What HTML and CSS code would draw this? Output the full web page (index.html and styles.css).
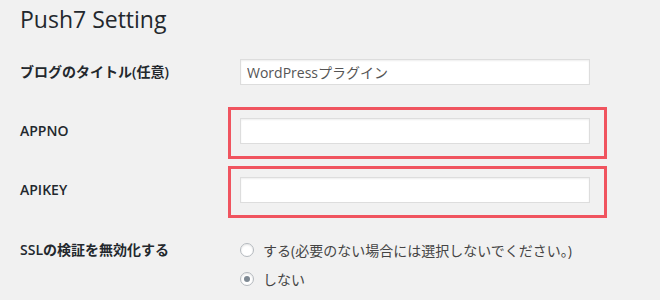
FILE: index.html
```html
<!DOCTYPE html>
<html lang="ja">
<head>
  <meta charset="UTF-8" />
  <title>Push7 Setting</title>
  <link rel="stylesheet" href="styles.css">
</head>
<body>
  <div class="wrap">
    <h1 class="page-title">Push7 Setting</h1>

    <div class="form-table">
      <div class="row">
        <div class="label">ブログのタイトル(任意)</div>
        <div class="field">
          <input type="text" class="regular-text" value="WordPressプラグイン" />
        </div>
      </div>

      <div class="row">
        <div class="label">APPNO</div>
        <div class="field">
          <div class="highlight">
            <input type="text" class="regular-text" value="" />
          </div>
        </div>
      </div>

      <div class="row">
        <div class="label">APIKEY</div>
        <div class="field">
          <div class="highlight">
            <input type="text" class="regular-text" value="" />
          </div>
        </div>
      </div>

      <div class="row row-top">
        <div class="label">SSLの検証を無効化する</div>
        <div class="field">
          <label class="radio"><span class="radio-dot"></span>する(必要のない場合には選択しないでください。)</label>
          <label class="radio"><span class="radio-dot checked"></span>しない</label>
        </div>
      </div>
    </div>
  </div>
</body>
</html>
```

FILE: styles.css
```css
* { box-sizing: border-box; margin: 0; padding: 0; }
body {
  background: #f1f1f1;
  color: #23282d;
  font-family: 'Open Sans', 'Noto Sans CJK JP', sans-serif;
  font-size: 14px;
}
.wrap { padding: 5px 20px 0; }
.page-title {
  font-size: 23px;
  font-weight: 400;
  line-height: 29px;
  height: 38px;
}

.row {
  display: grid;
  grid-template-columns: 220px 1fr;
  align-items: center;
  padding: 16px 0 17px;
}
.row-top { align-items: start; padding-top: 20px; }
.label {
  font-weight: 600;
  font-size: 14px;
  line-height: 20px;
}

.regular-text {
  display: block;
  width: 350px;
  height: 26px;
  padding: 0 6px;
  border: 1px solid #ddd;
  background: #fff;
  box-shadow: inset 0 1px 2px rgba(0,0,0,0.07);
  color: #555;
  font-family: 'Open Sans', 'Noto Sans CJK JP', sans-serif;
  font-size: 14px;
}

.highlight {
  border: 3px solid #f0545f;
  padding: 8px 14px 12px 9px;
  margin: -11px 0 -15px -12px;
  width: 379px;
}

.radio {
  display: flex;
  align-items: center;
  gap: 9px;
  height: 20px;
  margin-bottom: 9px;
  color: #444;
  font-size: 14px;
}
.radio-dot {
  width: 14px;
  height: 14px;
  border-radius: 50%;
  border: 1px solid #b4b9be;
  background: #fff;
  box-shadow: inset 0 1px 2px rgba(0,0,0,0.1);
  display: flex;
  align-items: center;
  justify-content: center;
}
.radio-dot.checked::before {
  content: '';
  width: 6px;
  height: 6px;
  border-radius: 50%;
  background: #7e8993;
}
```
